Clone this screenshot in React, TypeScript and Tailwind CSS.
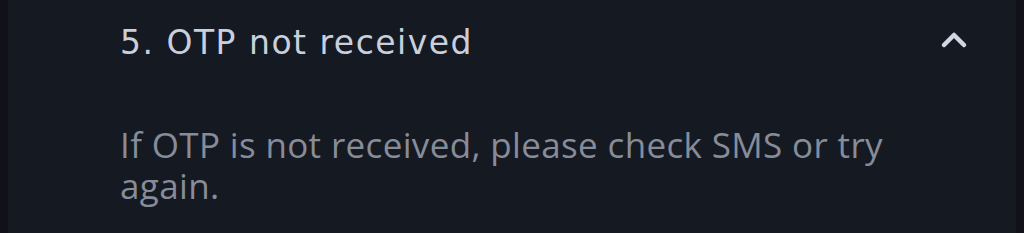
export default function App() {
  return (
    <div className="h-[233px] w-full bg-[#111219] px-2">
      <div className="h-full bg-[#151922] pl-[112px] pr-[48px] pt-[19px]">
        <button
          type="button"
          className="flex w-full items-center justify-between text-left"
        >
          <span className="font-['DejaVu_Sans',sans-serif] text-[33px] leading-[48px] tracking-[1.5px] text-[#c9cfdc]">
            5. OTP not received
          </span>
          <svg
            width="28"
            height="18"
            viewBox="0 0 28 18"
            fill="none"
            className="-mt-[6px]"
          >
            <path
              d="M4 14 L14 4 L24 14"
              stroke="#d0d6e2"
              strokeWidth="4.5"
              strokeLinecap="round"
              strokeLinejoin="round"
            />
          </svg>
        </button>
        <p className="mt-[57px] max-w-[790px] font-['Open_Sans',sans-serif] text-[35px] leading-[41px] tracking-[0.35px] text-[#878c99]">
          If OTP is not received, please check SMS or try again.
        </p>
      </div>
    </div>
  );
}
